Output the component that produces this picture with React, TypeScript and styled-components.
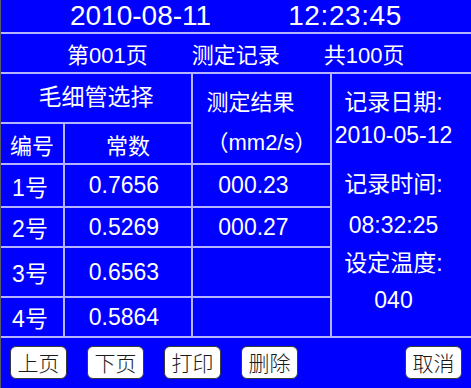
import React from "react";
import styled, { createGlobalStyle } from "styled-components";

const GlobalStyle = createGlobalStyle`
    html, body {
        margin: 0;
        padding: 0;
        background: #0000ff;
    }
    body {
        font-family: "Liberation Sans", "Noto Sans CJK SC", sans-serif;
        color: #ffffff;
    }
`;

const LINE = "#b4b4ff";

const Screen = styled.div`
    width: 470px;
    height: 388px;
    background: #0000ff;
    border-left: 1px solid #5a5a6a;
    display: flex;
    flex-direction: column;
    overflow: hidden;
`;

const TopBar = styled.div`
    height: 32px;
    display: flex;
    align-items: center;
    padding-left: 69px;
    gap: 77px;
    font-size: 28px;
    border-bottom: 2px solid ${LINE};
`;

const Clock = styled.span`
    letter-spacing: 0.6px;
`;

const PageBar = styled.div`
    height: 38px;
    display: flex;
    align-items: center;
    padding-left: 66px;
    gap: 44px;
    font-size: 22px;
    border-bottom: 2px solid ${LINE};
`;

const Table = styled.div`
    display: grid;
    grid-template-columns: 62px 126px 137px 1fr;
    grid-template-rows: 48px 39px 41px 38px 48px 38px;
    gap: 2px;
    background: ${LINE};
    border-bottom: 2px solid ${LINE};
`;

const Cell = styled.div<{ $col?: string; $row?: string; $shift?: number }>`
    background: #0000ff;
    display: flex;
    align-items: center;
    justify-content: center;
    font-size: 22px;
    grid-column: ${(p) => p.$col ?? "auto"};
    grid-row: ${(p) => p.$row ?? "auto"};
    padding-right: ${(p) => p.$shift ?? 0}px;
`;

const Value = styled.span`
    font-size: 23px;
`;

const GroupTitle = styled(Cell)`
    font-size: 23px;
    padding-bottom: 6px;
`;

const UnitCell = styled.div`
    background: #0000ff;
    grid-column: 3;
    grid-row: 1 / span 2;
    display: flex;
    flex-direction: column;
    align-items: center;
    padding-top: 16px;
    font-size: 22px;
`;

const UnitTitle = styled.span`
    line-height: 26px;
    margin-right: 22px;
`;

const Unit = styled.span`
    line-height: 26px;
    margin-top: 14px;
`;

const InfoCell = styled.div`
    background: #0000ff;
    grid-column: 4;
    grid-row: 1 / span 6;
    display: flex;
    flex-direction: column;
    align-items: center;
    padding-right: 16px;
    font-size: 23px;
`;

const InfoLine = styled.span<{ $mt: number }>`
    line-height: 26px;
    margin-top: ${(p) => p.$mt}px;
`;

const ButtonBar = styled.div`
    flex: 1;
    display: flex;
    align-items: flex-start;
    padding: 8px 9px 0 9px;
    gap: 20px;
`;

const Button = styled.button<{ $right?: boolean }>`
    width: 57px;
    height: 33px;
    padding: 0;
    background: #ffffff;
    border: 1px solid #3a3a3a;
    border-radius: 6px;
    color: #1a1a1a;
    font-family: "Noto Sans CJK SC", sans-serif;
    font-size: 21px;
    font-weight: 300;
    line-height: 31px;
    margin-left: ${(p) => (p.$right ? "auto" : "0")};
`;

const rows = [
    { no: "1号", k: "0.7656", r: "000.23" },
    { no: "2号", k: "0.5269", r: "000.27" },
    { no: "3号", k: "0.6563", r: "" },
    { no: "4号", k: "0.5864", r: "" },
];

const App = () => {
    return (
        <Screen>
            <GlobalStyle />
            <TopBar>
                <span>2010-08-11</span>
                <Clock>12:23:45</Clock>
            </TopBar>
            <PageBar>
                <span>第001页</span>
                <span>测定记录</span>
                <span>共100页</span>
            </PageBar>
            <Table>
                <GroupTitle $col="1 / span 2" $row="1">毛细管选择</GroupTitle>
                <UnitCell>
                    <UnitTitle>测定结果</UnitTitle>
                    <Unit>（mm2/s）</Unit>
                </UnitCell>
                <InfoCell>
                    <InfoLine $mt={15}>记录日期:</InfoLine>
                    <InfoLine $mt={7}>2010-05-12</InfoLine>
                    <InfoLine $mt={23}>记录时间:</InfoLine>
                    <InfoLine $mt={15}>08:32:25</InfoLine>
                    <InfoLine $mt={12}>设定温度:</InfoLine>
                    <InfoLine $mt={11}>040</InfoLine>
                </InfoCell>
                <Cell $col="1" $row="2">编号</Cell>
                <Cell $col="2" $row="2">常数</Cell>
                {rows.map((row, i) => (
                    <React.Fragment key={`row${i}`}>
                        <Cell $col="1" $row={`${i + 3}`} $shift={4}>
                            <Value>{row.no}</Value>
                        </Cell>
                        <Cell $col="2" $row={`${i + 3}`} $shift={8}>
                            <Value>{row.k}</Value>
                        </Cell>
                        <Cell $col="3" $row={`${i + 3}`} $shift={16}>
                            <Value>{row.r}</Value>
                        </Cell>
                    </React.Fragment>
                ))}
            </Table>
            <ButtonBar>
                <Button>上页</Button>
                <Button>下页</Button>
                <Button>打印</Button>
                <Button>删除</Button>
                <Button $right>取消</Button>
            </ButtonBar>
        </Screen>
    );
};

export default App;
